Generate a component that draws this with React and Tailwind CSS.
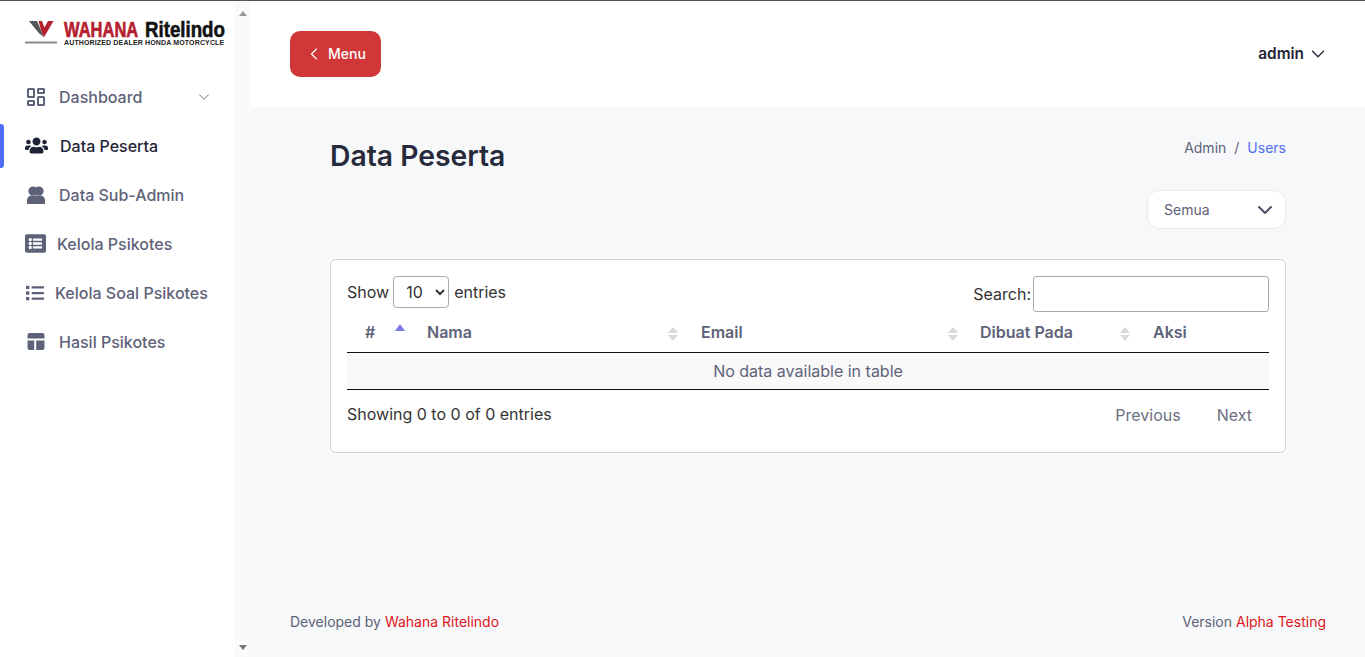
import React from "react";
import { FaUsers, FaListAlt, FaList } from "react-icons/fa";
import { ChevronDown, ChevronLeft } from "lucide-react";

const DashIcon = () => (
  <svg width="18" height="18" viewBox="0 0 18 18" fill="none" stroke="#5e6278" strokeWidth="2">
    <rect x="1" y="1" width="6" height="8" rx="0.5" />
    <rect x="11" y="1" width="6" height="4" rx="0.5" />
    <rect x="1" y="13" width="6" height="4" rx="0.5" />
    <rect x="11" y="9" width="6" height="8" rx="0.5" />
  </svg>
);

const SubAdminIcon = () => (
  <svg width="20" height="18" viewBox="0 0 20 18" fill="#5e6278">
    <circle cx="7" cy="5" r="4.6" />
    <circle cx="13" cy="5" r="4.6" />
    <path d="M1 18v-3.5C1 11.5 3 9.5 6 9.5h8c3 0 5 2 5 5V18z" />
  </svg>
);

const LayoutIcon = () => (
  <svg width="18" height="17" viewBox="0 0 18 17" fill="#5e6278">
    <path d="M2.5 0h13A2 2 0 0 1 17.5 2v3.5H.5V2a2 2 0 0 1 2-2z" />
    <path d="M.5 7.5h6.7V17H2.5a2 2 0 0 1-2-2z" />
    <path d="M9.2 7.5h8.3V15a2 2 0 0 1-2 2H9.2z" />
  </svg>
);

const Logo = () => (
  <svg width="212" height="32" viewBox="0 0 212 32" className="block">
    <path d="M6 6h8l7 16.3-5-4z" fill="#55565a" />
    <path d="M15.5 6H19l2.5 6.5L25 6h5.5L21 22.3 18 15z" fill="#b5202e" />
    <rect x="2" y="26.5" width="32" height="2" fill="#8a8a8e" />
    <text transform="translate(41 22) scale(1 1.35)" fontFamily="Liberation Sans, sans-serif" fontWeight="700" fontSize="16.5" fill="#b5202e" stroke="#b5202e" strokeWidth="0.5">WAHANA</text>
    <text transform="translate(122 22) scale(1 1.19)" fontFamily="Liberation Sans, sans-serif" fontWeight="700" fontSize="18.7" fill="#111" stroke="#111" strokeWidth="0.5">Ritelindo</text>
    <text x="41" y="30" fontFamily="Liberation Sans, sans-serif" fontWeight="700" fontSize="7" letterSpacing="0.14" fill="#222">AUTHORIZED DEALER HONDA MOTORCYCLE</text>
  </svg>
);

const Sort = ({ active }) => (
  <span className="flex flex-col gap-[2px]">
    <span className={active ? "w-0 h-0 border-x-[5px] border-x-transparent border-b-[7px] border-b-[#7a7adf]" : "w-0 h-0 border-x-[5px] border-x-transparent border-b-[6px] border-b-[#d8d9dd]"} />
    {!active && <span className="w-0 h-0 border-x-[5px] border-x-transparent border-t-[6px] border-t-[#d8d9dd]" />}
  </span>
);

const items = [
  { icon: <DashIcon />, label: "Dashboard", iconBox: "w-[22px] ml-[25px] mr-[12px]", chevron: true },
  { icon: <FaUsers size={23} color="#1f2437" />, label: "Data Peserta", iconBox: "w-[23px] ml-[25px] mr-[12px]", active: true },
  { icon: <SubAdminIcon />, label: "Data Sub-Admin", iconBox: "w-[20px] ml-[26px] mr-[13px]" },
  { icon: <FaListAlt size={21} color="#5e6278" />, label: "Kelola Psikotes", iconBox: "w-[21px] ml-[25px] mr-[11px]" },
  { icon: <FaList size={18} color="#5e6278" />, label: "Kelola Soal Psikotes", iconBox: "w-[18px] ml-[26px] mr-[11px]" },
  { icon: <LayoutIcon />, label: "Hasil Psikotes", iconBox: "w-[18px] ml-[27px] mr-[14px]" },
];

const SideItem = ({ it }) => (
  <div className={"relative flex items-center h-[49px] text-base font-medium " + (it.active ? "text-[#1f2437]" : "text-[#5e6278]")}>
    {it.active && <span className="absolute left-0 top-[3px] w-[4px] h-[44px] bg-[#4f6ef7] rounded-r-[3px]" />}
    <span className={"flex items-center justify-center shrink-0 " + it.iconBox}>{it.icon}</span>
    <span>{it.label}</span>
    {it.chevron && <ChevronDown size={18} strokeWidth={1.2} color="#5e6278" className="ml-auto mr-[22px]" />}
  </div>
);

const Th = ({ w, children, active, sortRight, pl }) => (
  <div className={"flex items-center shrink-0 " + w + " " + pl}>
    <span>{children}</span>
    {sortRight && <span className={"ml-auto " + sortRight}><Sort active={active} /></span>}
  </div>
);

export default function App() {
  return (
    <div className="flex flex-col h-[657px] w-full overflow-hidden bg-white font-['Inter',sans-serif] border-t border-[#555]">
      <div className="flex flex-1 min-h-0">
        <aside className="flex w-[235px] shrink-0 flex-col bg-white">
          <div className="h-[71px] pt-[14px] pl-[23px]"><Logo /></div>
          <div>
            {items.map((it) => <SideItem key={it.label} it={it} />)}
          </div>
        </aside>
        <div className="flex w-[15px] shrink-0 flex-col items-center justify-between bg-[#fafafa] pt-[10px] pb-[7px]">
          <span className="w-0 h-0 border-x-[4.5px] border-x-transparent border-b-[5px] border-b-[#999]" />
          <span className="w-0 h-0 border-x-[4.5px] border-x-transparent border-t-[5px] border-t-[#777]" />
        </div>
        <main className="flex flex-1 min-w-0 flex-col bg-[#f7f8fa]">
          <header className="flex h-[106px] shrink-0 items-center justify-between bg-white pl-[40px] pr-[36px]">
            <button className="flex items-center h-[46px] w-[91px] rounded-[10px] bg-[#d13639] pl-[14px] text-sm font-medium text-white">
              <ChevronLeft size={20} strokeWidth={1.4} className="mr-[4px]" />
              Menu
            </button>
            <div className="flex items-center gap-[3px] text-[15.4px] font-semibold text-[#1f2437]">
              admin
              <ChevronDown size={22} strokeWidth={1.4} />
            </div>
          </header>
          <section className="flex-1 pl-[80px] pr-[79px]">
            <div className="flex items-start justify-between pt-[29px]">
              <h1 className="text-[28.3px] leading-[40px] font-semibold text-[#262a3b]">Data Peserta</h1>
              <div className="flex items-center gap-[8px] pt-[2px] text-sm leading-[20px] text-[#5e6278]">
                <span>Admin</span><span>/</span><span className="text-[#4f6ef7]">Users</span>
              </div>
            </div>
            <div className="flex justify-end mt-[14px]">
              <div className="flex items-center justify-between h-[39px] w-[139px] rounded-[12px] border border-[#e8eaef] bg-white pl-[16px] pr-[8px] text-sm text-[#5e6278]">
                <span>Semua</span>
                <ChevronDown size={24} strokeWidth={2} color="#4b5064" />
              </div>
            </div>
            <div className="mt-[30px] h-[194px] rounded-[6px] border border-[#d5d6d9] bg-white px-[16px] pt-[16px]">
              <div className="flex justify-between text-base text-[#333]">
                <label className="flex items-center h-[32px]">
                  Show
                  <select className="ml-[4px] mr-[5px] h-[32px] w-[56px] rounded-[4px] border border-[#aaa] bg-white pl-[8px] text-base text-[#333] appearance-auto">
                    <option>10</option>
                  </select>
                  entries
                </label>
                <label className="flex items-center h-[36px]">
                  Search:
                  <input className="ml-[2px] h-[36px] w-[236px] rounded-[3px] border border-[#aaa] bg-white" />
                </label>
              </div>
              <div className="flex h-[37px] items-start pt-[4px] border-b border-[#111] text-base font-semibold text-[#5e6278] mt-[4px]">
                <Th w="w-[80px]" pl="pl-[18px]" active sortRight="mr-[22px] -translate-y-[5px]">#</Th>
                <Th w="w-[274px]" sortRight="mr-[23px] translate-y-[2px]">Nama</Th>
                <Th w="w-[279px]" sortRight="mr-[22px] translate-y-[2px]">Email</Th>
                <Th w="w-[173px]" sortRight="mr-[23px] translate-y-[2px]">Dibuat Pada</Th>
                <Th w="w-[100px]">Aksi</Th>
              </div>
              <div className="flex h-[37px] items-center justify-center border-b border-[#111] bg-[#f9f9f9] text-base text-[#5e6278]">
                No data available in table
              </div>
              <div className="flex items-start justify-between pt-[12px] text-base">
                <span className="text-[#333]">Showing 0 to 0 of 0 entries</span>
                <div className="flex gap-[36px] pr-[17px] pt-[1px] text-[#6b7080]">
                  <span>Previous</span><span>Next</span>
                </div>
              </div>
            </div>
          </section>
          <footer className="flex h-[70px] shrink-0 items-start justify-between pl-[40px] pr-[39px] pt-[25px] text-sm text-[#5e6278]">
            <span>Developed by <span className="text-[#e0151b]">Wahana Ritelindo</span></span>
            <span>Version <span className="text-[#e0151b]">Alpha Testing</span></span>
          </footer>
        </main>
      </div>
    </div>
  );
}
